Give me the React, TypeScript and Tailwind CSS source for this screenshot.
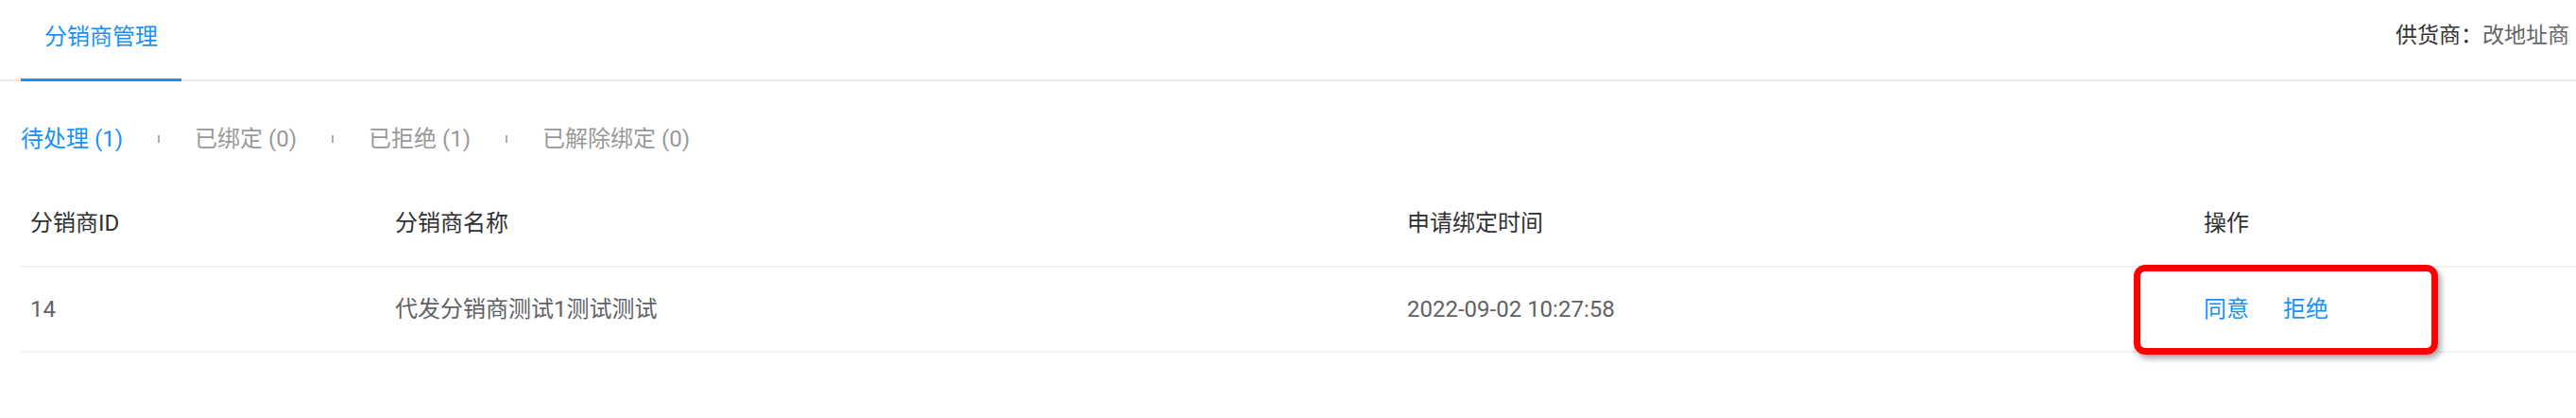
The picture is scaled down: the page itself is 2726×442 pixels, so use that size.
import React from 'react';

const filters = [
  { label: '待处理', count: 1, active: true },
  { label: '已绑定', count: 0 },
  { label: '已拒绝', count: 1 },
  { label: '已解除绑定', count: 0 },
];

const rows = [{ id: 14, name: '代发分销商测试1测试测试', time: '2022-09-02 10:27:58' }];

export default function App() {
  return (
    <div
      className="w-full h-[442px] bg-white overflow-hidden"
      style={{ fontFamily: 'Roboto, "Noto Sans CJK SC", sans-serif' }}
    >
      {/* Tabs */}
      <div className="flex h-[86px] border-b-2 border-[#e4e7ed]">
        <div className="ml-[22px] -mb-[2px] h-[86px] px-[25px] pb-[5px] flex items-center border-b-[3px] border-[#1890ff] text-[24px] text-[#1890ff]">
          分销商管理
        </div>
        <div className="ml-auto w-[191px] shrink-0 h-full pb-[8px] flex items-center whitespace-nowrap text-[23px]">
          <span className="text-[#333]">供货商：</span>
          <span className="text-[#666]">改地址商</span>
        </div>
      </div>

      {/* Status filters */}
      <div className="flex items-center h-[105px] pt-[16px] pl-[22px] text-[24px]">
        {filters.map((f, i) => (
          <div key={f.label} className="flex items-center">
            {i > 0 && <span className="mx-[37px] w-[2px] h-[8px] bg-[#aaa]" />}
            <span className={f.active ? 'text-[#1890ff]' : 'text-[#999]'}>
              {f.label} ({f.count})
            </span>
          </div>
        ))}
      </div>

      {/* Table */}
      <div className="ml-[22px] text-[24px]">
        <div className="flex h-[92px] border-b-2 border-[#f2f2f2] text-[#303133]">
          <div className="w-[386px] pl-[10px] flex items-center">分销商ID</div>
          <div className="w-[1071px] pl-[10px] flex items-center">分销商名称</div>
          <div className="w-[843px] pl-[10px] flex items-center">申请绑定时间</div>
          <div className="flex-1 pl-[10px] flex items-center">操作</div>
        </div>
        {rows.map((r) => (
          <div key={r.id} className="flex h-[90px] border-b-2 border-[#f2f2f2] text-[#606266]">
            <div className="w-[386px] pl-[10px] flex items-center">{r.id}</div>
            <div className="w-[1071px] pl-[10px] flex items-center">{r.name}</div>
            <div className="w-[843px] pl-[10px] flex items-center">{r.time}</div>
            <div className="relative flex-1 pl-[10px] flex items-center gap-[36px] text-[#1890ff]">
              <span>同意</span>
              <span>拒绝</span>
              {/* annotation box */}
              <div className="absolute left-[-64px] top-[-3px] w-[322px] h-[95px] border-[7px] border-[#ff0000] rounded-[12px] shadow-[3px_4px_6px_rgba(0,0,0,0.35)]" />
            </div>
          </div>
        ))}
      </div>
    </div>
  );
}
